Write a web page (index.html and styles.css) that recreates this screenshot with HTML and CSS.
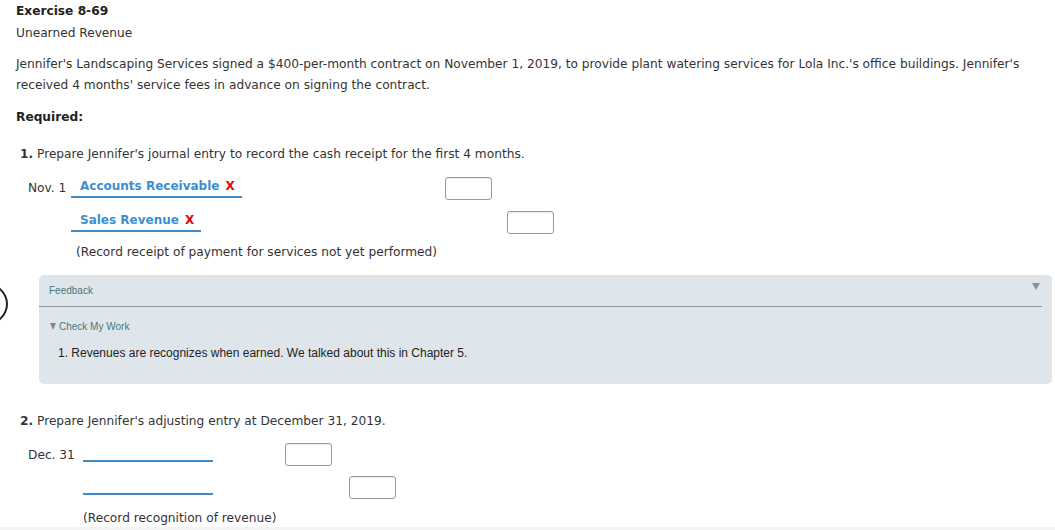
FILE: index.html
```html
<!DOCTYPE html>
<html lang="en">
<head>
  <meta charset="UTF-8" />
  <title>Exercise 8-69</title>
  <link rel="stylesheet" href="styles.css">
</head>
<body>
  <div class="page">
    <div class="title">Exercise 8-69</div>
    <div class="subtitle">Unearned Revenue</div>

    <p class="intro">Jennifer's Landscaping Services signed a $400-per-month contract on November 1, 2019, to provide plant watering services for Lola Inc.'s office buildings. Jennifer's received 4 months' service fees in advance on signing the contract.</p>

    <div class="required">Required:</div>

    <div class="question q1"><b>1.</b> Prepare Jennifer's journal entry to record the cash receipt for the first 4 months.</div>

    <div class="journal j1">
      <div class="date">Nov. 1</div>
      <div class="account"><span class="pick">Accounts Receivable <span class="wrong">X</span></span></div>
      <div class="amount"><input type="text" /></div>
      <div class="amount"></div>

      <div class="date"></div>
      <div class="account"><span class="pick">Sales Revenue <span class="wrong">X</span></span></div>
      <div class="amount"></div>
      <div class="amount"><input type="text" /></div>
    </div>
    <div class="memo m1">(Record receipt of payment for services not yet performed)</div>

    <div class="feedback-wrap">
      <span class="ring"></span>
      <div class="feedback">
        <div class="fb-head">
          <span>Feedback</span>
          <span class="fb-arrow"></span>
        </div>
        <div class="fb-toggle"><span class="tri"></span>Check My Work</div>
        <div class="fb-text">1. Revenues are recognizes when earned. We talked about this in Chapter 5.</div>
      </div>
    </div>

    <div class="question q2"><b>2.</b> Prepare Jennifer's adjusting entry at December 31, 2019.</div>

    <div class="journal j2">
      <div class="date">Dec. 31</div>
      <div class="account"><span class="pick blank"></span></div>
      <div class="amount"><input type="text" /></div>
      <div class="amount"></div>

      <div class="date"></div>
      <div class="account"><span class="pick blank"></span></div>
      <div class="amount"></div>
      <div class="amount"><input type="text" /></div>
    </div>
    <div class="memo m2">(Record recognition of revenue)</div>
  </div>
  <div class="page-end"></div>
</body>
</html>
```

FILE: styles.css
```css
body {
  margin: 0;
  font-family: "DejaVu Sans", Verdana, sans-serif;
  font-size: 12.2px;
  color: #333;
  background: #fff;
}

.page {
  padding: 3px 16px 0 16px;
}

.title {
  font-weight: bold;
  font-size: 12.2px;
  line-height: 16px;
  color: #222;
}

.subtitle {
  margin-top: 6px;
  line-height: 16px;
}

.intro {
  margin: 13px 0 0 0;
  line-height: 21px;
  max-width: 1025px;
}

.required {
  margin-top: 13px;
  font-weight: bold;
  font-size: 12.2px;
  line-height: 16px;
  color: #222;
}

.question {
  margin-top: 21px;
  margin-left: 4px;
  line-height: 16px;
}

.journal {
  display: grid;
  align-items: center;
}

.j1 {
  grid-template-columns: 55px 362px 62px 46px;
  grid-auto-rows: 34px;
  margin-top: 9px;
  margin-left: 12px;
}

.j2 {
  grid-template-columns: 55px 202px 64px 46px;
  grid-auto-rows: 33px;
  margin-top: 9px;
  margin-left: 12px;
}

.date {
  color: #333;
}

.pick {
  display: inline-block;
  border-bottom: 2px solid #3d8bcb;
  padding: 0 7px 2px 9px;
  margin-left: -12px;
  color: #3b8fd1;
  font-weight: bold;
  font-size: 12px;
  line-height: 16px;
}

.pick.blank {
  width: 130px;
  padding: 0;
  margin-left: 0;
  height: 15px;
}

.wrong {
  color: #e8000b;
  margin-left: 2px;
}

input {
  display: block;
  box-sizing: border-box;
  width: 47px;
  height: 23px;
  border: 1px solid #9a9a9a;
  border-radius: 3px;
  box-shadow: inset 0 1px 1px rgba(0,0,0,0.08);
  background: #fff;
  margin: 0;
}

.memo {
  margin-left: 60px;
  line-height: 16px;
}

.m1 {
  margin-top: 5px;
}

.m2 {
  margin-left: 67px;
  margin-top: 6px;
}

.feedback-wrap {
  position: relative;
  margin-top: 15px;
  margin-left: 23px;
  margin-right: -13px;
}

.ring {
  position: absolute;
  left: -75px;
  top: 8px;
  width: 40px;
  height: 38px;
  border: 2px solid #222;
  border-radius: 50%;
}

.feedback {
  background: #dfe6eb;
  border-radius: 5px;
  height: 109px;
  padding: 0 10px;
  font-family: "Liberation Sans", Arial, sans-serif;
  color: #4c7779;
}

.fb-head {
  display: flex;
  justify-content: space-between;
  align-items: center;
  height: 31px;
  border-bottom: 1px solid #8e969b;
  margin-left: -10px;
  padding-left: 10px;
  font-size: 10px;
}

.fb-arrow {
  width: 0;
  height: 0;
  border-left: 4px solid transparent;
  border-right: 4px solid transparent;
  border-top: 7px solid #8a9095;
  margin-right: 2px;
  margin-top: -8px;
}

.fb-toggle {
  display: flex;
  align-items: center;
  margin-top: 14px;
  font-size: 10px;
  line-height: 12px;
}

.tri {
  width: 0;
  height: 0;
  border-left: 3.5px solid transparent;
  border-right: 3.5px solid transparent;
  border-top: 7px solid #80878c;
  margin: 0 3px 1px 1px;
}

.fb-text {
  margin-top: 13px;
  margin-left: 9px;
  font-size: 12px;
  color: #222;
  line-height: 14px;
}

.q2 {
  margin-top: 29px;
}

.page-end {
  margin-top: 1px;
  height: 12px;
  background: #f4f4f4;
}
```
